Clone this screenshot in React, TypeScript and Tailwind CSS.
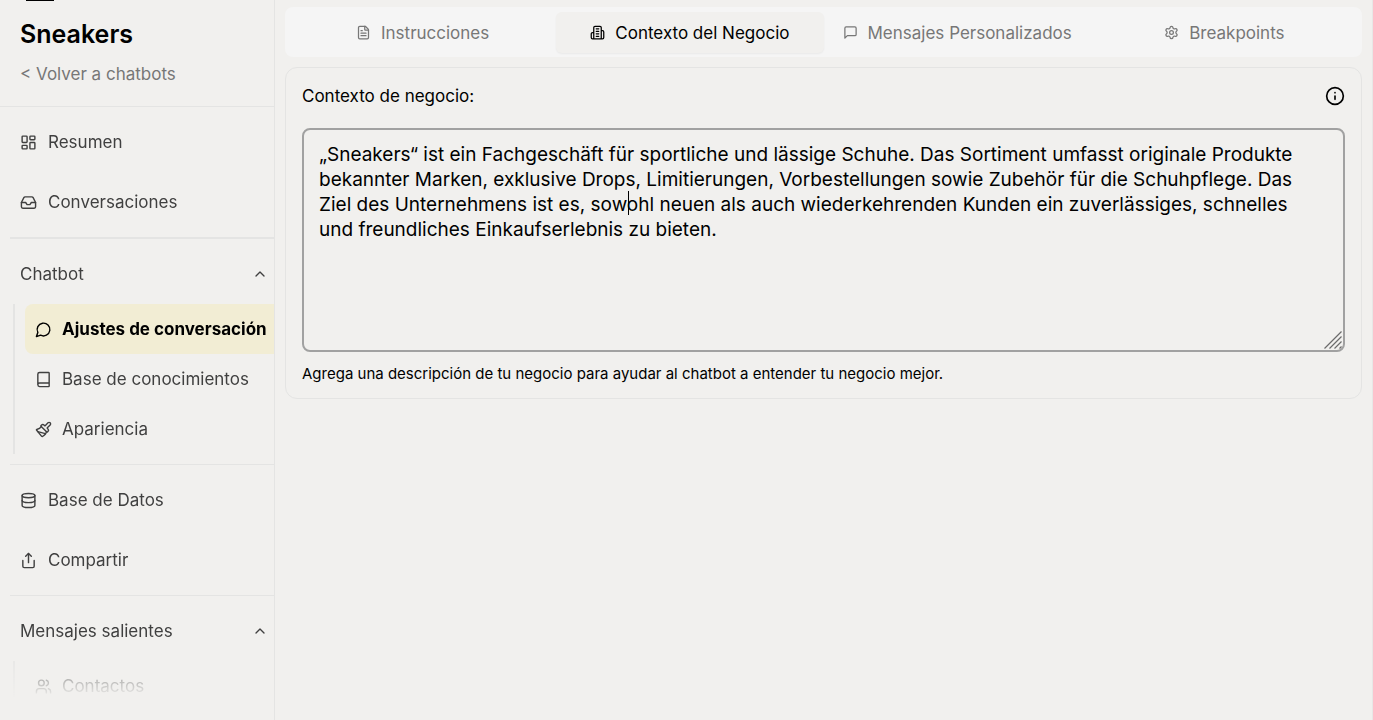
import {
  Book,
  ChevronUp,
  Database,
  FileText,
  Inbox,
  Info,
  LayoutDashboard,
  Paintbrush,
  Settings,
  Share,
  Users,
} from "lucide-react";
import type { ComponentType } from "react";

type IconProps = { size?: number; className?: string };
type Item = { label: string; icon: ComponentType<IconProps>; active?: boolean };

function StrokeIcon({ size = 24, className, d }: IconProps & { d: string }) {
  return (
    <svg
      aria-hidden="true"
      width={size}
      height={size}
      viewBox="0 0 24 24"
      fill="none"
      stroke="currentColor"
      strokeWidth="2"
      strokeLinecap="round"
      strokeLinejoin="round"
      className={className}
    >
      <path d={d} />
    </svg>
  );
}

const BuildingIcon = (props: IconProps) => (
  <StrokeIcon
    {...props}
    d="M6 22V4a2 2 0 0 1 2-2h8a2 2 0 0 1 2 2v18ZM6 12H4a2 2 0 0 0-2 2v6a2 2 0 0 0 2 2h2M18 9h2a2 2 0 0 1 2 2v9a2 2 0 0 1-2 2h-2M10 6h4M10 10h4M10 14h4M10 18h4"
  />
);

const ChatCircleIcon = (props: IconProps) => (
  <StrokeIcon {...props} d="M7.9 20A9 9 0 1 0 4 16.1L2 22Z" />
);

const ChatSquareIcon = (props: IconProps) => (
  <StrokeIcon {...props} d="M21 15a2 2 0 0 1-2 2H7l-4 4V5a2 2 0 0 1 2-2h14a2 2 0 0 1 2 2z" />
);

const overviewItems: Item[] = [
  { label: "Resumen", icon: LayoutDashboard },
  { label: "Conversaciones", icon: Inbox },
];

const chatbotItems: Item[] = [
  { label: "Ajustes de conversación", icon: ChatCircleIcon, active: true },
  { label: "Base de conocimientos", icon: Book },
  { label: "Apariencia", icon: Paintbrush },
];

const dataItems: Item[] = [
  { label: "Base de Datos", icon: Database },
  { label: "Compartir", icon: Share },
];

const outboundItems: Item[] = [{ label: "Contactos", icon: Users }];

const tabs: Item[] = [
  { label: "Instrucciones", icon: FileText },
  { label: "Contexto del Negocio", icon: BuildingIcon, active: true },
  { label: "Mensajes Personalizados", icon: ChatSquareIcon },
  { label: "Breakpoints", icon: Settings },
];

const businessContext =
  "„Sneakers“ ist ein Fachgeschäft für sportliche und lässige Schuhe. Das Sortiment umfasst originale Produkte bekannter Marken, exklusive Drops, Limitierungen, Vorbestellungen sowie Zubehör für die Schuhpflege. Das Ziel des Unternehmens ist es, sowohl neuen als auch wiederkehrenden Kunden ein zuverlässiges, schnelles und freundliches Einkaufserlebnis zu bieten.";

function NavLinks({ items }: { items: Item[] }) {
  return (
    <div className="flex flex-col gap-2.5 py-2.5">
      {items.map(({ label, icon: Icon }) => (
        <a key={label} href="#" className="flex h-[50px] items-center gap-[11px] px-2.5">
          <Icon size={17} className="shrink-0" />
          {label}
        </a>
      ))}
    </div>
  );
}

function NavGroup({ title, items }: { title: string; items: Item[] }) {
  return (
    <div className="py-2.5">
      <button type="button" className="flex h-[50px] w-full items-center justify-between pl-2.5 pr-1.5">
        {title}
        <ChevronUp size={16} />
      </button>
      <div className="ml-[3px] mt-[5px] flex flex-col border-l-2 border-[#e4e4e3] pl-2.5">
        {items.map(({ label, icon: Icon, active }) => (
          <a
            key={label}
            href="#"
            className={
              active
                ? "flex h-[50px] items-center gap-2.5 whitespace-nowrap rounded-l-lg bg-[#f2edd4] pl-2.5 font-bold text-black"
                : "flex h-[50px] items-center gap-2.5 whitespace-nowrap pl-2.5"
            }
          >
            <Icon size={17} className="shrink-0" />
            {label}
          </a>
        ))}
      </div>
    </div>
  );
}

function Sidebar() {
  return (
    <aside className="flex w-[275px] shrink-0 flex-col overflow-hidden border-r border-[#e4e4e3]">
      <div className="border-b border-[#e4e4e3] px-5 pb-5">
        <div className="ml-1.5 h-px w-7 bg-black" />
        <h1 className="mt-[15px] text-[25px] leading-9 font-semibold text-black">Sneakers</h1>
        <a href="#" className="mt-2.5 block text-[17px] leading-6 text-[#777]">
          &lt; Volver a chatbots
        </a>
      </div>
      <nav className="min-h-0 flex-1 overflow-hidden pl-2.5 text-[17px] leading-6 text-[#404040] [mask-image:linear-gradient(to_bottom,black_calc(100%-80px),transparent_calc(100%-22px))]">
        <NavLinks items={overviewItems} />
        <hr className="border-t-2 border-[#e4e4e3]" />
        <NavGroup title="Chatbot" items={chatbotItems} />
        <hr className="border-[#e4e4e3]" />
        <NavLinks items={dataItems} />
        <hr className="border-[#e4e4e3]" />
        <NavGroup title="Mensajes salientes" items={outboundItems} />
      </nav>
    </aside>
  );
}

export default function App() {
  return (
    <div className="flex h-screen bg-[#f1f0ee] font-[Inter,'Liberation_Sans',sans-serif] text-black">
      <Sidebar />
      <main className="min-w-0 flex-1 border-r border-[#e8e7e6] px-2.5 pt-[7px]">
        <div role="tablist" className="grid grid-cols-4 rounded-lg bg-[#f5f5f5] px-1 pt-[5px] pb-1">
          {tabs.map(({ label, icon: Icon, active }) => (
            <button
              key={label}
              type="button"
              role="tab"
              aria-selected={!!active}
              className={
                active
                  ? "flex h-[41px] items-center justify-center gap-2.5 whitespace-nowrap rounded-md bg-[#f1f0ee] text-[17px] leading-6 text-black shadow-xs"
                  : "flex h-[41px] items-center justify-center gap-2.5 whitespace-nowrap rounded-md text-[17px] leading-6 text-[#777]"
              }
            >
              <Icon size={15} className="shrink-0" />
              {label}
            </button>
          ))}
        </div>

        <section className="mt-2.5 rounded-xl border border-[#e4e4e3] px-4 pt-4 pb-3">
          <div className="flex items-center justify-between">
            <label htmlFor="business-context" className="text-[17px] leading-6">
              Contexto de negocio:
            </label>
            <button type="button" aria-label="Información">
              <Info size={20} strokeWidth={2} />
            </button>
          </div>
          <div className="relative mt-5">
            <textarea
              id="business-context"
              defaultValue={businessContext}
              spellCheck={false}
              className="block h-56 w-full resize-none rounded-lg border-2 border-[#a1a1a1] bg-transparent py-3 pr-5 pl-[15px] text-[19px] leading-[25px] caret-transparent outline-none"
            />
            {/* text cursor */}
            <span aria-hidden="true" className="pointer-events-none absolute top-[63px] left-[326px] h-6 w-px bg-black" />
            {/* resize grip */}
            <svg
              aria-hidden="true"
              viewBox="0 0 18 18"
              className="pointer-events-none absolute right-[3px] bottom-[3px] size-[18px]"
              fill="none"
              stroke="#6b6b6b"
              strokeWidth="1.2"
            >
              <path d="M0.5 17.5L17.5 0.5M5.5 17.5L17.5 5.5M10.5 17.5L17.5 10.5M15.5 17.5L17.5 15.5" />
            </svg>
          </div>
          <p className="mt-2.5 text-[15px] leading-6">
            Agrega una descripción de tu negocio para ayudar al chatbot a entender tu negocio mejor.
          </p>
        </section>
      </main>
    </div>
  );
}
